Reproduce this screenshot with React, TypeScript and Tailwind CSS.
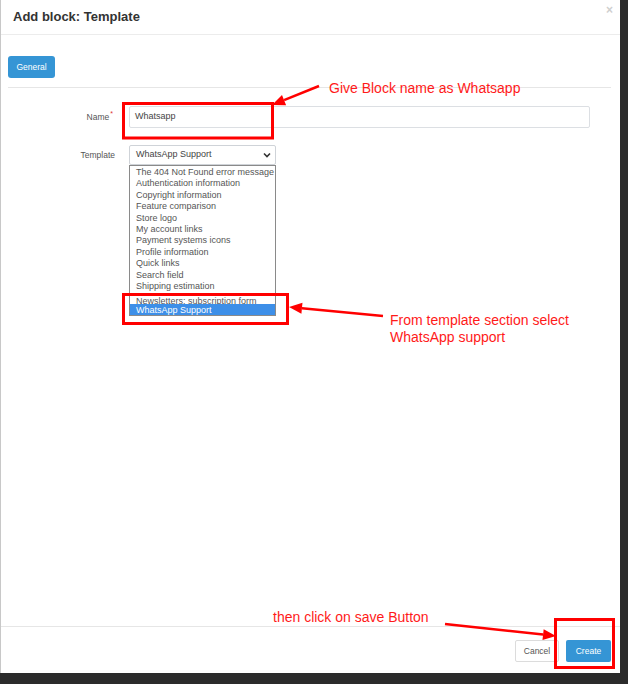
import React from "react";

const templates = [
  "The 404 Not Found error message",
  "Authentication information",
  "Copyright information",
  "Feature comparison",
  "Store logo",
  "My account links",
  "Payment systems icons",
  "Profile information",
  "Quick links",
  "Search field",
  "Shipping estimation",
];

// arrow from (x1,y1) to tip (x2,y2)
function Arrow({ x1, y1, x2, y2 }: { x1: number; y1: number; x2: number; y2: number }) {
  const a = Math.atan2(y2 - y1, x2 - x1);
  const len = 13;
  const w = 5.5;
  const bx = x2 - Math.cos(a) * len;
  const by = y2 - Math.sin(a) * len;
  const p1 = `${bx + Math.sin(a) * w},${by - Math.cos(a) * w}`;
  const p2 = `${bx - Math.sin(a) * w},${by + Math.cos(a) * w}`;
  return (
    <g>
      <line x1={x1} y1={y1} x2={bx} y2={by} stroke="#ff0000" strokeWidth={2.5} />
      <polygon points={`${x2},${y2} ${p1} ${p2}`} fill="#ff0000" />
    </g>
  );
}

function Annotations() {
  return (
    <div className="absolute inset-0 pointer-events-none">
      <svg width={628} height={684} className="absolute left-0 top-0">
        <rect x={123.5} y={103.5} width={149} height={34.5} fill="none" stroke="#ff0000" strokeWidth={3} />
        <rect x={123.5} y={294.5} width={164} height={29} fill="none" stroke="#ff0000" strokeWidth={3} />
        <rect x={555.5} y={619.5} width={58} height={48} fill="none" stroke="#ff0000" strokeWidth={3} />
        <Arrow x1={319} y1={86} x2={272} y2={105} />
        <Arrow x1={383} y1={316} x2={289} y2={307} />
        <Arrow x1={445} y1={624} x2={556} y2={636} />
      </svg>
      <div className="absolute left-[329px] top-[80px] text-[14px] leading-[17px] text-[#ff1a1a]">
        Give Block name as Whatsapp
      </div>
      <div className="absolute left-[390px] top-[312px] text-[14px] leading-[17px] text-[#ff1a1a]">
        From template section select
        <br />
        WhatsApp support
      </div>
      <div className="absolute left-[273px] top-[609px] text-[14px] leading-[17px] text-[#ff1a1a]">
        then click on save Button
      </div>
    </div>
  );
}

export default function App() {
  return (
    <div
      className="relative w-[628px] h-[684px] bg-[#2b2b2b] overflow-hidden"
      style={{ fontFamily: '"Liberation Sans", Arial, sans-serif' }}
    >
      <div className="w-[620px] h-[673px] bg-white border-l border-[#c8c8c8] flex flex-col">
        <div className="relative h-[35px] border-b border-[#ececec] pl-[12px] flex items-center">
          <h1 className="text-[13px] font-bold text-[#333]">Add block: Template</h1>
          <span className="absolute right-[7px] top-[1px] text-[12px] font-bold text-[#cfcfcf]">×</span>
        </div>

        <div className="flex-1 pl-[7px] pr-[9px] pt-[21px]">
          <button className="block h-[22px] w-[47px] rounded-[3px] bg-[#3595d5] text-white text-[8.5px]">
            General
          </button>
          <div className="mt-[9px] border-t border-[#e6e6e6]" />

          <div className="mt-[18px] flex items-center">
            <label className="w-[107px] text-right text-[8.5px] text-[#555] pr-[2px]">
              Name<sup className="text-[#d33] text-[7px] ml-[1px]">*</sup>
            </label>
            <div className="ml-[14px] h-[22px] w-[461px] border border-[#dcdfe3] rounded-[2px] flex items-center pl-[5px] text-[9px] text-[#444]">
              Whatsapp
            </div>
          </div>

          <div className="mt-[17px] flex items-start">
            <label className="w-[107px] pt-[4px] text-right text-[8.5px] text-[#555]">Template</label>
            <div className="ml-[14px] w-[147px]">
              <div className="h-[20px] border border-[#cfd3d8] rounded-[2px] flex items-center justify-between pl-[6px] pr-[4px] text-[9px] text-[#444]">
                <span>WhatsApp Support</span>
                <svg width="8" height="6" viewBox="0 0 8 6">
                  <polyline points="1,1.5 4,4.5 7,1.5" fill="none" stroke="#333" strokeWidth="1.6" />
                </svg>
              </div>
              <div className="h-[151px] border border-[#8a8a8a] pt-[1px] text-[9px] leading-[11.4px] text-[#555] overflow-hidden">
                {templates.map((t) => (
                  <div key={t} className="pl-[6px] whitespace-nowrap">
                    {t}
                  </div>
                ))}
                <div className="h-[11.4px] overflow-hidden pl-[6px] pt-[4px] whitespace-nowrap">
                  Newsletters: subscription form
                </div>
                <div className="h-[12.5px] pl-[6px] bg-[#3d8fe8] text-white whitespace-nowrap leading-[12.5px]">
                  WhatsApp Support
                </div>
              </div>
            </div>
          </div>
        </div>

        <div className="h-[47px] border-t border-[#e6e6e6] flex items-start justify-end gap-[7px] pt-[13px] pr-[9px]">
          <button className="h-[22px] w-[44px] rounded-[2px] border border-[#dcdcdc] bg-white text-[8.5px] text-[#555]">
            Cancel
          </button>
          <button className="h-[22px] w-[45px] rounded-[2px] bg-[#3595d5] text-white text-[8.5px]">
            Create
          </button>
        </div>
      </div>
      <Annotations />
    </div>
  );
}
